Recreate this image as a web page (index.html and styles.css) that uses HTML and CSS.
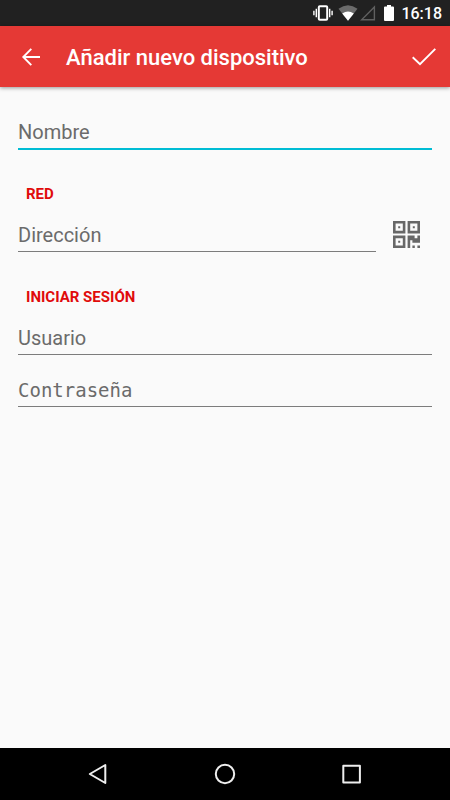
FILE: index.html
```html
<!DOCTYPE html>
<html lang="es">

<head>
    <meta charset="UTF-8">
    <meta name="viewport" content="width=device-width, initial-scale=1.0">
    <title>Añadir nuevo dispositivo</title>
    <link rel="stylesheet" href="styles.css">
</head>

<body>
    <div class="status-bar">
        <!-- vibrate -->
        <svg class="vibrate" width="20" height="16" viewBox="0 0 20 16" fill="none" stroke="#fff">
            <rect x="5.8" y="1.2" width="8.4" height="13.6" rx="1" stroke-width="2" />
            <path d="M3.3 3.8v8.4M16.7 3.8v8.4M0.9 5.8v4.4M19.1 5.8v4.4" stroke-width="1.4" />
        </svg>
        <!-- wifi -->
        <svg class="wifi" width="20" height="16" viewBox="0 0 20 16">
            <path d="M0.5 3.8Q10-3.2 19.5 3.8L10 15.7Z" fill="#6b6b6b" />
            <path d="M4.2 8.4Q10 4.4 15.8 8.4L10 15.7Z" fill="#fff" />
        </svg>
        <!-- mobile signal -->
        <svg class="signal" width="16" height="16" viewBox="0 0 16 16">
            <path d="M1.6 14.8H14.4V2Z" fill="none" stroke="#606060" stroke-width="1.4" />
        </svg>
        <!-- battery -->
        <svg class="battery" width="10" height="16" viewBox="0 0 10 16">
            <path d="M3 0h4v1.6h2q1 0 1 1V15q0 1-1 1H1q-1 0-1-1V2.600q0-1 1-1h2z" fill="#fff" />
        </svg>
        <span class="clock">16:18</span>
    </div>

    <header class="app-bar">
        <button class="icon-button" type="button" aria-label="Atrás">
            <svg width="20" height="20" viewBox="0 0 20 20" fill="none" stroke="#fff" stroke-width="1.9">
                <path d="M10.300 1.800L2.300 10l8 8.200M2.300 10H19" />
            </svg>
        </button>
        <h1>Añadir nuevo dispositivo</h1>
        <button class="icon-button" type="submit" form="device-form" aria-label="Guardar">
            <svg width="24" height="20" viewBox="0 0 24 20" fill="none" stroke="#fff" stroke-width="1.9">
                <path d="M0.700 10.200L8 17.200L23.300 1.800" />
            </svg>
        </button>
    </header>

    <main>
        <form id="device-form" class="device-form">
            <input class="field active" type="text" name="name" placeholder="Nombre" aria-label="Nombre">

            <h2>RED</h2>
            <div class="field-row">
                <input class="field" type="text" name="address" placeholder="Dirección" aria-label="Dirección">
                <button class="qr-button" type="button" aria-label="Escanear código QR">
                    <svg width="27" height="27" viewBox="0 0 27 27" fill="#676767">
                        <path fill-rule="evenodd" d="M0 0h12.400v12.400H0zM2.600 2.600v7.200h7.200V2.600z" />
                        <path fill-rule="evenodd" d="M14.600 0H27v12.400H14.600zM17.200 2.600v7.200h7.200V2.600z" />
                        <path fill-rule="evenodd" d="M0 14.600h12.400V27H0zM2.600 17.200v7.200h7.200v-7.200z" />
                        <path d="M5.200 5.200h2v2h-2zM19.800 5.200h2v2h-2zM5.200 19.800h2v2h-2z" />
                        <path d="M14.600 14.600h7v2.600h2.800v-2.600H27V21.800h-7.600v-2.600h-2.200V27h-2.600z" />
                        <path d="M19.400 24.400h2.400V27h-2.400zM24.400 24.400H27V27h-2.600z" />
                    </svg>
                </button>
            </div>

            <h2>INICIAR SESIÓN</h2>
            <input class="field" type="text" name="user" placeholder="Usuario" aria-label="Usuario">
            <input class="field" type="password" name="password" placeholder="Contraseña" aria-label="Contraseña">
        </form>
    </main>

    <nav class="nav-bar">
        <button type="button" aria-label="Volver">
            <svg width="22" height="22" viewBox="0 0 22 22" fill="none" stroke="#eee" stroke-width="2" stroke-linejoin="round">
                <path d="M2.800 11L18.300 2v18z" />
            </svg>
        </button>
        <button type="button" aria-label="Inicio">
            <svg width="22" height="22" viewBox="0 0 22 22" fill="none" stroke="#eee" stroke-width="2">
                <circle cx="11" cy="11" r="9.200" />
            </svg>
        </button>
        <button type="button" aria-label="Recientes">
            <svg width="22" height="22" viewBox="0 0 22 22" fill="none" stroke="#eee" stroke-width="2" stroke-linejoin="round">
                <rect x="2.300" y="2.800" width="16.600" height="16.600" />
            </svg>
        </button>
    </nav>
</body>

</html>
```

FILE: styles.css
```css
* {
    box-sizing: border-box;
}

body {
    font-family: Roboto, sans-serif;
    margin: 0;
    min-height: 100vh;
    display: flex;
    flex-direction: column;
    background: #fafafa;
}

button {
    display: flex;
    align-items: center;
    justify-content: center;
    padding: 0;
    border: none;
    background: none;
    cursor: pointer;
}

/* Status bar */
.status-bar {
    height: 26px;
    padding: 0 8px;
    display: flex;
    align-items: center;
    justify-content: flex-end;
    background: #212121;
    color: #fff;
}

.wifi {
    margin-left: 5px;
}

.signal {
    margin-left: 2px;
}

.battery {
    margin-left: 8px;
}

.clock {
    margin-left: 7px;
    padding-top: 2px;
    font-size: 16px;
    font-weight: 500;
    line-height: 24px;
}

/* App bar */
.app-bar {
    height: 61px;
    display: flex;
    align-items: center;
    background: #e53935;
    color: #fff;
    box-shadow: 0 1px 4px rgba(0, 0, 0, 0.4);
}

.app-bar h1 {
    flex: 1;
    margin: 0;
    padding: 2px 0 0 4px;
    font-size: 22px;
    font-weight: 500;
    line-height: 28px;
}

.icon-button {
    width: 62px;
    height: 56px;
}

.icon-button:last-child {
    width: 52px;
}

/* Form */
main {
    flex: 1;
    padding: 16px 18px;
}

.device-form {
    display: flex;
    flex-direction: column;
    gap: 6px;
}

.device-form h2 {
    margin: 0;
    padding: 33px 8px 0;
    font-size: 15px;
    font-weight: 700;
    line-height: 12px;
    color: #e00b0b;
}

.field {
    width: 100%;
    height: 46px;
    padding: 17px 0 4px;
    border: none;
    border-bottom: 1px solid #7c7c7c;
    border-radius: 0;
    outline: none;
    background: none;
    font-family: Roboto, sans-serif;
    font-size: 20px;
    line-height: 24px;
    color: #212121;
}

.field::placeholder {
    color: #6b6b6b;
    opacity: 1;
}

.field[type="password"] {
    font-family: "DejaVu Sans Mono", monospace;
    font-size: 19px;
}

.field.active,
.field:focus {
    height: 47px;
    margin-bottom: -1px;
    border-bottom: 2px solid #00bcd4;
}

.field-row {
    display: flex;
    gap: 4px;
}

.field-row .field {
    flex: 1;
    min-width: 0;
}

.qr-button {
    width: 52px;
    height: 46px;
    padding-top: 10px;
}

/* Navigation bar */
.nav-bar {
    height: 52px;
    padding: 0 35px;
    display: flex;
    background: #000;
}

.nav-bar button {
    flex: 1;
}
```
